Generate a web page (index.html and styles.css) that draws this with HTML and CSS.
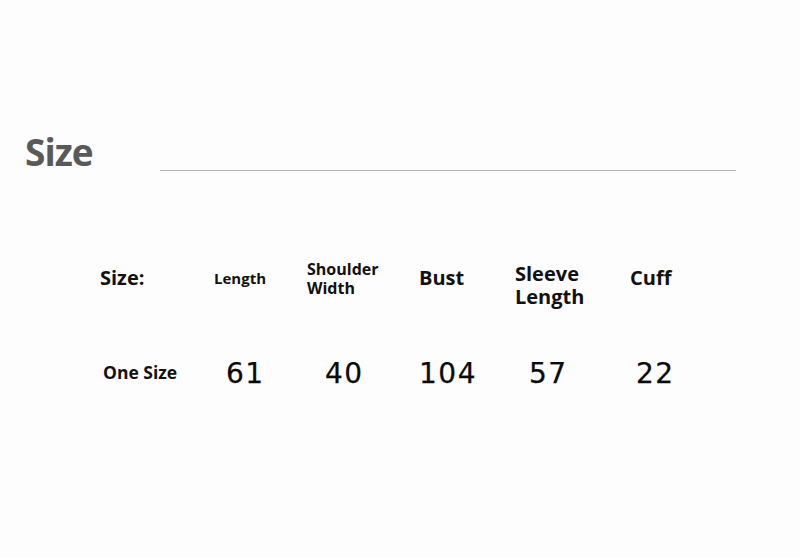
FILE: index.html
```html
<!DOCTYPE html>
<html>
<head>
<meta charset="utf-8">
<link rel="stylesheet" href="styles.css">
</head>
<body>
<div class="title-bar">
  <h1 class="title">Size</h1>
  <div class="rule"></div>
</div>
<div class="table">
  <div class="hd hd-lg">Size:</div>
  <div class="hd hd-sm">Length</div>
  <div class="hd hd-md">Shoulder<br>Width</div>
  <div class="hd hd-lg">Bust</div>
  <div class="hd hd-lg hd-sleeve">Sleeve<br>Length</div>
  <div class="hd hd-lg">Cuff</div>

  <div class="val label v1">One Size</div>
  <div class="val num v2">61</div>
  <div class="val num v3">40</div>
  <div class="val num v4">104</div>
  <div class="val num v5">57</div>
  <div class="val num v6">22</div>
</div>
</body>
</html>
```
FILE: styles.css
```css
html, body {
  margin: 0;
  padding: 0;
}
body {
  width: 800px;
  height: 558px;
  background: #fdfdfd;
  overflow: hidden;
  font-family: "Open Sans", "Noto Sans", sans-serif;
  color: #111;
}
.title-bar {
  display: flex;
  align-items: flex-end;
  padding: 133px 0 0 25px;
}
.title {
  margin: 0;
  width: 135px;
  font-size: 37px;
  line-height: 37px;
  font-weight: 700;
  color: #595959;
  letter-spacing: -1px;
}
.rule {
  width: 576px;
  height: 1px;
  background: #b3b3b3;
  margin-bottom: -1px;
}
.table {
  display: grid;
  grid-template-columns: 114px 93px 112px 96px 115px 80px;
  grid-template-rows: 60px 40px;
  row-gap: 45px;
  margin: 78px 0 0 100px;
  align-items: center;
}
.hd {
  font-weight: 700;
  color: #111;
}
.hd-lg {
  font-size: 20px;
  line-height: 22.3px;
}
.hd-sm {
  font-size: 15px;
  line-height: 18px;
}
.hd-md {
  font-size: 16px;
  line-height: 19.5px;
  margin-top: 2px;
}
.hd-sleeve {
  line-height: 23.5px;
  margin-top: 14px;
}
.label {
  font-weight: 700;
  font-size: 17.5px;
  line-height: 22px;
  margin-top: -2px;
}
.num {
  font-family: "DejaVu Sans", sans-serif;
  font-size: 28px;
  line-height: 32px;
  letter-spacing: 1.5px;
  color: #0a0a0a;
  -webkit-text-stroke: 0.25px #0a0a0a;
  margin-top: 2px;
}
.v1 { padding-left: 3px; }
.v2 { padding-left: 12px; }
.v3 { padding-left: 18px; }
.v4 { padding-left: 0px; }
.v5 { padding-left: 14px; }
.v6 { padding-left: 6px; }
```
